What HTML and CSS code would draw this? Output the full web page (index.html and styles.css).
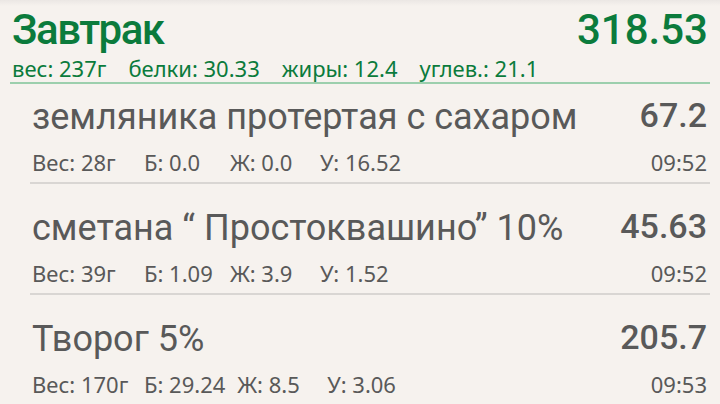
FILE: index.html
```html
<!DOCTYPE html>
<html lang="ru">
<head>
<meta charset="utf-8">
<link rel="stylesheet" href="styles.css">
</head>
<body>
<div class="screen">
  <header class="meal">
    <div class="meal-row">
      <span class="meal-title">Завтрак</span>
      <span class="meal-total">318.53</span>
    </div>
    <div class="meal-sub">
      <span>вес: 237г</span>
      <span>белки: 30.33</span>
      <span>жиры: 12.4</span>
      <span>углев.: 21.1</span>
    </div>
  </header>
  <ul class="items">
    <li class="item">
      <div class="item-row">
        <span class="item-name">земляника протертая с сахаром</span>
        <span class="item-cal">67.2</span>
      </div>
      <div class="item-sub">
        <span class="f f-w">Вес: 28г</span>
        <span class="f f-b">Б: 0.0</span>
        <span class="f f-f">Ж: 0.0</span>
        <span class="f f-c">У: 16.52</span>
        <span class="time">09:52</span>
      </div>
    </li>
    <li class="item">
      <div class="item-row">
        <span class="item-name">сметана “ Простоквашино” 10%</span>
        <span class="item-cal">45.63</span>
      </div>
      <div class="item-sub">
        <span class="f f-w">Вес: 39г</span>
        <span class="f f-b">Б: 1.09</span>
        <span class="f f-f">Ж: 3.9</span>
        <span class="f f-c">У: 1.52</span>
        <span class="time">09:52</span>
      </div>
    </li>
    <li class="item">
      <div class="item-row">
        <span class="item-name">Творог 5%</span>
        <span class="item-cal">205.7</span>
      </div>
      <div class="item-sub">
        <span class="f f-w">Вес: 170г</span>
        <span class="f f-b">Б: 29.24</span>
        <span class="f f-f">Ж: 8.5</span>
        <span class="f f-c">У: 3.06</span>
        <span class="time">09:53</span>
      </div>
    </li>
  </ul>
</div>
</body>
</html>
```

FILE: styles.css
```css
html, body {
  margin: 0;
  padding: 0;
  background: #f6f2ee;
}

body {
  width: 720px;
  height: 404px;
  overflow: hidden;
  font-family: Roboto, "Noto Sans", sans-serif;
}

.screen {
  background: linear-gradient(#ebe7e4 0, #f6f2ee 6px, #f6f2ee 100%);
  height: 404px;
}

.meal {
  margin: 0 10px;
  padding: 6px 2px 0 2px;
  border-bottom: 2px solid #9ccfad;
  color: #0b7b3c;
}

.meal-row {
  display: flex;
  justify-content: space-between;
  align-items: baseline;
  line-height: 48px;
}

.meal-title {
  font-size: 42px;
  font-weight: 500;
  letter-spacing: -1.5px;
}

.meal-total {
  font-size: 42px;
  font-weight: 500;
}

.meal-sub {
  display: flex;
  gap: 22px;
  font-family: "Noto Sans", Roboto, sans-serif;
  font-size: 22px;
  line-height: 28px;
}

.items {
  list-style: none;
  margin: 0;
  padding: 0;
}

.item {
  margin: 0 10px 0 30px;
  padding: 22px 3px 5px 2px;
  border-bottom: 2px solid #d9d6d3;
  color: #595959;
}

.item:first-child {
  padding-top: 11px;
}

.item:last-child {
  border-bottom: none;
}

.item-row {
  display: flex;
  justify-content: space-between;
  align-items: flex-start;
}

.item-name {
  font-size: 36px;
  line-height: 44px;
}

.item-cal {
  font-size: 34px;
  font-weight: 500;
  line-height: 40px;
}

.item-sub {
  display: flex;
  margin-top: 8px;
  font-family: "Noto Sans", Roboto, sans-serif;
  font-size: 22px;
  line-height: 30px;
}

.f {
  margin-right: 12px;
}

.f-w { min-width: 100px; }
.f-b { min-width: 74px; }
.f-f { min-width: 78px; }

.time {
  margin-left: auto;
}
```
